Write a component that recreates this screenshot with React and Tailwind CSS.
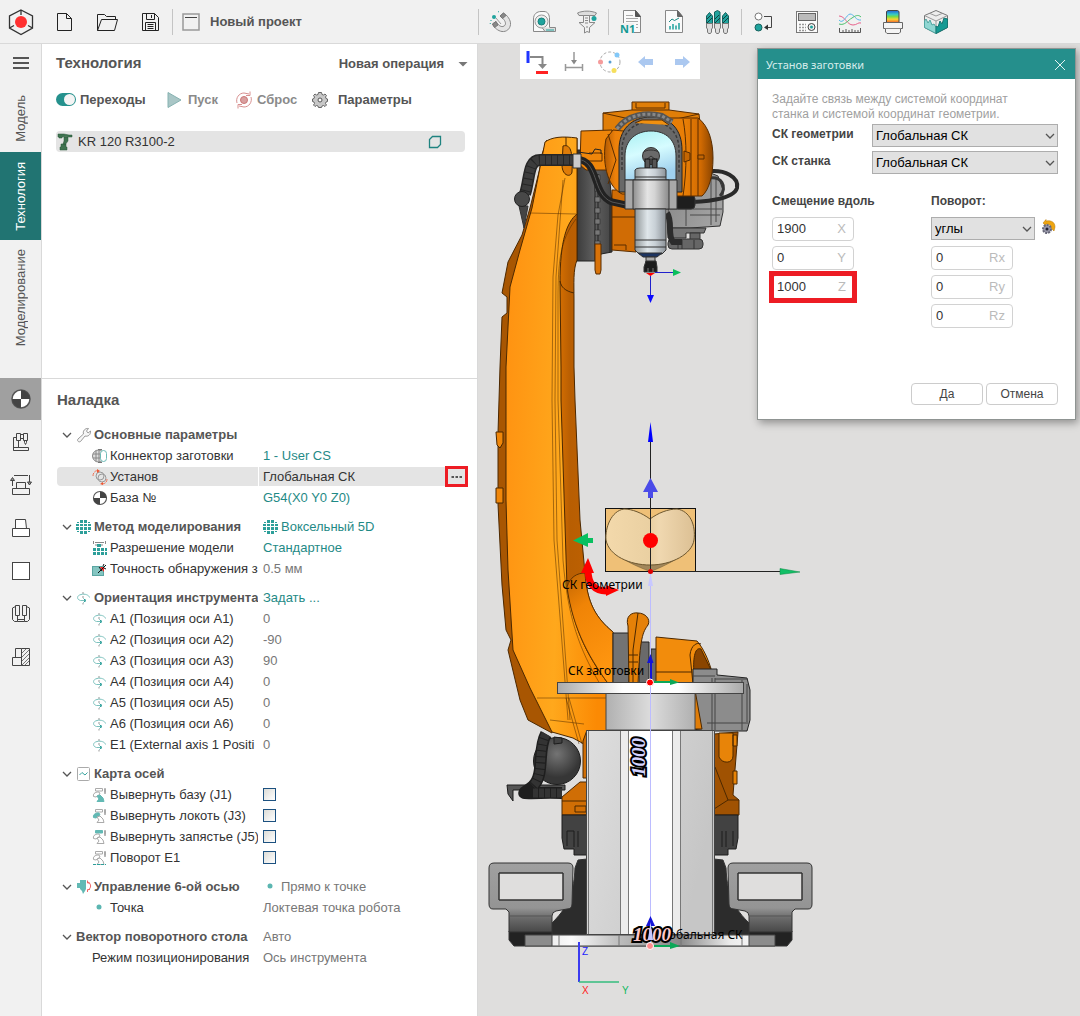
import { memo } from 'react';

// Base svg wrapper - used for all the icons
const Icon = ({ size = 24, box = 24, className = '', children }) => (
    <svg
        width={size}
        height={size}
        viewBox={`0 0 ${box} ${box}`}
        fill="none"
        stroke="#444"
        strokeWidth="1"
        className={`shrink-0 overflow-visible ${className}`}
        aria-hidden="true"
    >
        {children}
    </svg>
);

const TEAL = '#1fa39d';

/* ---------- Header icons ---------- */

const LogoIcon = () => (
    <Icon size={26} box={26}>
        <path d="M12 1 L23.500 7 V19 L12 25.500 L0.500 19 V7 Z M12 1 V6 M0.500 19 L5 16.500 M23.500 19 L19 16.500" strokeWidth="1.300" stroke="#333" />
        <circle cx="12" cy="13" r="6" fill="#ff3030" stroke="none" />
    </Icon>
);

const NewIcon = () => (
    <Icon>
        <path d="M4.500 3.500 H13.500 L18.500 8.500 V20.500 H4.500 Z M13.500 3.500 V8.500 H18.500" stroke="#222" />
    </Icon>
);

const OpenIcon = () => (
    <Icon>
        <path d="M1.500 20.500 V4.500 H8.500 L10.500 6.500 H19.500 V9.500 M1.500 20.500 L5.500 9.500 H21.500 L18.500 20.500 Z" stroke="#222" />
    </Icon>
);

const SaveIcon = () => (
    <Icon>
        <path d="M3.500 3.500 H15.500 L19.500 7.500 V20.500 H3.500 Z M7.500 3.500 V9.500 H15.500 V3.500 M12.500 5 V8 M6.500 20 V12.500 H16.500 V20 M8.500 14.500 H14.500 M8.500 16.500 H14.500 M8.500 18.500 H14.500" stroke="#222" />
    </Icon>
);

const ProjectIcon = () => (
    <Icon size={18} box={18}>
        <path d="M1 1 H17 V17 H1 Z" stroke="#999" strokeWidth="1.500" />
        <path d="M3 4.500 H15" stroke="#444" />
    </Icon>
);

const MagnetIcon = () => (
    <Icon>
        <path d="M11 6 L14.500 3 C18 5 22 10 21.500 14.500 C21 19 17.500 22 13 21.500 C9 21 5 17.500 3.500 14 L7 11.500 C9 15 11.500 17 14 16.500 C17 15.500 17 13 15.500 10.500 C14.500 9 13 7.500 11 6 Z" fill="#e4e4e4" stroke="#888" />
        <path d="M11 6 L14.500 3 L17 5.500 L13.500 8.500 Z M3.500 14 L7 11.500 L9 15 L5.500 17.500 Z" fill="#888" stroke="#777" />
        <circle cx="5" cy="7" r="2" fill={TEAL} stroke="none" />
        <path d="M1.500 11 L2.500 10 M9 2 L10 1.500 M1 14 L1.500 13" stroke={TEAL} />
        <path d="M7 8 L12 14" stroke="#999" />
    </Icon>
);

const TapeIcon = () => (
    <Icon>
        <path d="M1.500 21.500 V9 C1.500 4 5 1.500 9 1.500 H12 C16 1.500 17.500 5 17.500 9 V21.500 Z" fill="#fafafa" stroke="#888" />
        <circle cx="9.500" cy="11.500" r="6.500" stroke="#999" fill="#eee" />
        <circle cx="9.500" cy="11.500" r="3.500" fill={TEAL} stroke="#17807b" />
        <path d="M10 17.500 L13 21.500 H23.500 V17.500 H18" fill="#ddd" stroke="#888" />
        <path d="M14 20 H22" stroke={TEAL} />
    </Icon>
);

const CaliperIcon = () => (
    <Icon>
        <path d="M2.500 3 C8 0.500 16 0.500 21.500 3 L20 5.500 H4 Z" fill="#ddd" stroke="#888" />
        <path d="M8.500 5.500 H14.500 V12.500 H20 L14.500 17.500 V22.500 L12 21.500 L9.500 23 V17.500 L4 12.500 H8.500 Z" fill="#f0f0f0" stroke="#888" />
        <path d="M10 8 H13 M10 10.500 H13 M10 13 H13 M11 17 H13" stroke="#888" />
        <circle cx="19" cy="8.500" r="2.500" fill={TEAL} stroke="none" />
    </Icon>
);

const NcIcon = () => (
    <Icon>
        <path d="M4.500 0.500 H16.500 L21.500 6.500 V22.500 H4.500 Z" fill="#fafafa" stroke="#888" />
        <path d="M16.500 0.500 V6.500 H21.500 Z" fill="#555" stroke="#555" />
        <path d="M7 5.500 H14 M7 8.500 H19 M7 11.500 H19 M17 14.500 H19 M17 17.500 H19" stroke="#aaa" />
        <rect x="1" y="13" width="14" height="11" fill="#f1f1f1" stroke="none" />
        <text x="1" y="23" fill="#159a94" stroke="none" fontSize="11" fontWeight="700" fontFamily="Noto Sans, sans-serif">N1</text>
    </Icon>
);

const ReportIcon = () => (
    <Icon>
        <path d="M3.500 0.500 H15.500 L20.500 6.500 V22.500 H3.500 Z" fill="#fafafa" stroke="#888" />
        <path d="M15.500 0.500 V6.500 H20.500 Z" fill="#666" stroke="#666" />
        <path d="M7 12 L10 9 L12.500 10.500 L17 8" stroke="#1f8a85" />
        <path d="M8 19.500 V16 M11 19.500 V14 M14 19.500 V15.500 M17 19.500 V13" stroke={TEAL} strokeWidth="1.500" />
    </Icon>
);

const ToolsIcon = () => (
    <Icon>
        {[0, 8, 16].map((x) => (
            <g key={x} transform={`translate(${x} 0)`}>
                <path
                    d={x === 8 ? 'M1.500 15 V2 L4.500 0.500 L7 2 V15 Z' : 'M1.500 15 V6 L4.500 2.500 L7.500 6 V15 Z'}
                    fill={TEAL}
                    stroke="#155f5c"
                />
                <path d="M2 13 L7 8 M2 9 L6 5" stroke="#123f3e" />
                <path d="M1.500 13.500 H7.500 V18 L6.500 19 V22 L5.500 23.500 H3.500 L2.500 22 V19 L1.500 18 Z" fill="#ddd" stroke="#777" />
            </g>
        ))}
    </Icon>
);

const LinkIcon = () => (
    <Icon>
        <circle cx="6.500" cy="6.500" r="3.500" fill="#fff" stroke="#777" />
        <circle cx="6.500" cy="17.500" r="3.500" fill={TEAL} stroke="#17605d" />
        <path d="M12 6.500 H19.500 V17.500 H14" stroke="#444" />
        <path d="M16 14.500 L12 17.500 L16 20 Z" fill="#333" stroke="none" />
    </Icon>
);

const CalcIcon = () => (
    <Icon>
        <rect x="1.500" y="1.500" width="21" height="21" fill="#fbfbfb" stroke="#777" />
        <rect x="3.500" y="3.500" width="17" height="7" fill="#bbb" stroke="#666" />
        <path d="M4 14.500 H11 M4 17.500 H11 M4 20.500 H11" stroke="#999" strokeWidth="1.500" strokeDasharray="2 1" />
        <circle cx="16.500" cy="17" r="3.500" stroke="#444" fill="#eee" />
        <circle cx="16.500" cy="17" r="1.500" fill={TEAL} stroke="none" />
    </Icon>
);

const CurvesIcon = () => (
    <Icon>
        <path d="M1 6 C7 6 9 15 15 15 C19 15 20 12 23 13" stroke="#e8628c" />
        <path d="M1 10 C5 15 8 5 12 4 C16 4 18 11 23 10" stroke="#58b7ea" />
        <path d="M1 14 C7 16 10 10 14 8 C17 6 20 4 23 7" stroke="#4fc06f" />
        <path d="M1.500 18 V22.500 H22.500 V18 M5 22 V20 M8 22 V19 M11 22 V20 M14 22 V19 M17 22 V20 M20 22 V20" stroke="#555" />
    </Icon>
);

const GradientToolIcon = () => (
    <Icon>
        <defs>
            <linearGradient id="rainbow" x2="0" y2="1">
                <stop offset="0" stopColor="#235fd8" />
                <stop offset="0.3" stopColor="#35c8c8" />
                <stop offset="0.5" stopColor="#78dc45" />
                <stop offset="0.7" stopColor="#f7d432" />
                <stop offset="1" stopColor="#f4502d" />
            </linearGradient>
        </defs>
        <path d="M5.500 13 V1.500 L7 0.500 H16.500 L18 1.500 V13 Z" fill="url(#rainbow)" stroke="#444" />
        <path d="M2.500 12.500 H21.500 V18.500 H19.500 V22 L18 23.500 H6 L4.500 22 V18.500 H2.500 Z" fill="#f4f4f4" stroke="#666" />
        <path d="M4.500 18.500 H19.500" stroke="#888" />
    </Icon>
);

const CubeIcon = () => (
    <Icon>
        <path d="M12 0.500 L23.500 5.500 V17.500 L12 23.500 L0.500 17.500 V5.500 Z" fill="#ededed" stroke="#777" />
        <path d="M0.500 11 L2 9 L4 13 L6 10 L8 15 L10 14 L12 17 V23.500 L0.500 17.500 Z" fill="#8fd6d2" stroke="#4fa6a2" />
        <path d="M12 23.500 V16 L14 17 L16 11 L18 14 L20 8 L23.500 9 V17.500 Z" fill="#149a94" stroke="#167672" />
        <path d="M0.500 5.500 L12 11 L23.500 5.500 M12 11 V16 M6 3.500 L12 6 L18 3.500" stroke="#999" />
    </Icon>
);

/* ---------- View toolbar icons ---------- */

const SnapIcon = () => (
    <Icon>
        <path d="M2 1 V13" stroke="#1f35ff" strokeWidth="3" />
        <path d="M4 7 H16.500 V15" stroke="#888" strokeWidth="2" />
        <path d="M12 14 H21 L16.500 19 Z" fill="#888" stroke="none" />
        <path d="M10 22.500 H22" stroke="#f22" strokeWidth="3" />
    </Icon>
);

const DistanceIcon = () => (
    <Icon>
        <path d="M12 2 V13 M3 17.500 H21 M3.500 14 V21 M20.500 14 V21" stroke="#999" strokeWidth="1.500" />
        <path d="M9 10 L12 14.500 L15 10 Z" fill="#888" stroke="none" />
    </Icon>
);

const OrbitIcon = () => (
    <Icon>
        <circle cx="12" cy="12" r="10" stroke="#aaa" strokeDasharray="3 2" />
        <circle cx="19" cy="5" r="2.500" fill="#82c8f8" stroke="none" />
        <circle cx="2.500" cy="12" r="2.500" fill="#f59b9b" stroke="none" />
        <circle cx="16" cy="20.500" r="2.500" fill="#f6df5c" stroke="none" />
        <circle cx="12" cy="12" r="1.500" fill="#5a9fd0" stroke="none" />
    </Icon>
);

const BackIcon = () => (
    <Icon>
        <path d="M4 12 L11 6 V9 H19 V15 H11 V18 Z" fill="#abc8f0" stroke="none" />
    </Icon>
);

const ForwardIcon = () => (
    <Icon>
        <path d="M20 12 L13 6 V9 H5 V15 H13 V18 Z" fill="#abc8f0" stroke="none" />
    </Icon>
);

/* ---------- Sidebar icons ---------- */

const OriginIcon = ({ size = 22 }) => (
    <Icon size={size} box={22}>
        <circle cx="11" cy="11" r="9" fill="#fff" stroke="#555" strokeWidth="1.500" />
        <path d="M11 11 V2 A9 9 0 0 1 20 11 Z M11 11 V20 A9 9 0 0 1 2 11 Z" fill="#444" stroke="none" />
    </Icon>
);

const MachineIcon = () => (
    <Icon size={22} box={22}>
        <path d="M6.500 2.500 H10.500 V9.500 H6.500 Z M13.500 2.500 H17.500 V9.500 H13.500 Z M10.500 3.500 H13.500 M10.500 7.500 H13.500 M14.500 9.500 V11.500 L15.500 13.500 L16.500 11.500 V9.500 M6.500 6.500 H3.500 V19.500 M8.500 9.500 V16.500 M3.500 16.500 H18.500 V19.500 H3.500 Z" />
    </Icon>
);

const ClampIcon = () => (
    <Icon size={24} box={24}>
        <path d="M5 2.500 H19 M3.500 15.500 H20.500 V21.500 H3.500 Z M7.500 15.500 V9.500 H16.500 V15.500 M3.500 13 V7 M20.500 2 V9" />
        <path d="M3.500 4.500 L1.500 7.500 H5.500 Z M20.500 12 L18.500 9 H22.500 Z" fill="#999" />
    </Icon>
);

const FixtureIcon = () => (
    <Icon size={22} box={22}>
        <path d="M2.500 11.500 H19.500 V19.500 H2.500 Z M5.500 11.500 V2.500 H15.500 L16.500 11.500" fill="#fff" />
    </Icon>
);

const StockIcon = () => (
    <Icon size={22} box={22}>
        <rect x="2.500" y="2.500" width="17" height="17" fill="#fff" />
    </Icon>
);

const HeadsIcon = () => (
    <Icon size={22} box={22}>
        <path d="M5.500 2.500 H9.500 V12.500 H5.500 Z M12.500 2.500 H16.500 V12.500 H12.500 Z M5.500 3.500 L2.500 5 V16.500 L4.500 18.500 H7.500 V12.500 M16.500 3.500 L19.500 5 V16.500 L17.500 18.500 H14.500 V12.500 M7.500 16.500 H14.500 M7.500 18.500 H14.500" />
    </Icon>
);

const PartIcon = () => (
    <Icon size={22} box={22}>
        <path d="M2.500 19.500 V11.500 H11.500 V19.500 Z M5.500 11.500 V2.500 H11.500 M11.500 2.500 H19.500 V19.500 H11.500 Z" />
        <path d="M12 7 L16 3 M12 11 L19 4 M12 15 L19 8 M12 19 L19 12 M15 19 L19 15" stroke="#777" />
    </Icon>
);

/* ---------- Panel icons ---------- */

const RobotIcon = () => (
    <Icon size={18} box={18}>
        <path d="M2 1 H8 L13 2 H16 V4 H13 L10 3.500 L6 4 V5 H3 V4 H2 Z M8 4 L12 4 V8 L9 12 L7 11 L8 8 Z M5 11 H10 V14 H11 V17 H4 V14 H5 Z" fill="#3f7350" stroke="#2b593b" strokeWidth="0.500" />
    </Icon>
);

const ResetIcon = () => (
    <Icon size={18} box={18}>
        <circle cx="9" cy="9" r="3.500" fill="#d9a0a0" stroke="#c77" />
        <path d="M2 12 C0.500 7 4 2 9 2 L14 3 M16 6 C17.500 11 14 16 9 16 L4 15 M15 0.500 V4.500 H11 M3 17.500 V13.500 H7" stroke="#d89090" />
    </Icon>
);

const GearIcon = () => (
    <Icon size={18} box={18}>
        <path d="M7.500 1.500 H10.500 L11 3.500 L12.500 4 L14 3 L15.500 4.500 L14.500 6 L15 7.500 L16.500 8 V10.500 L15 11 L14.500 12.500 L15.500 14 L14 15.500 L12.500 14.500 L11 15 L10.500 16.500 H7.500 L7 15 L5.500 14.500 L4 15.500 L2.500 14 L3.500 12.500 L3 11 L1.500 10.500 V8 L3 7.500 L3.500 6 L2.500 4.500 L4 3 L5.500 4 L7 3.500 Z" fill="#c8c8c8" stroke="#666" />
        <circle cx="9" cy="9" r="2" fill="#fff" stroke="#555" />
    </Icon>
);

const WrenchIcon = () => (
    <Icon size={16} box={16}>
        <path d="M2 12 L7.500 7 C6.500 4 9 1 12.500 1.500 L10.500 4 L12 6 L14.500 4 C15 7.500 12 10 9 9 L4.500 14.500 C3 15.500 0.500 14 2 12 Z" stroke="#999" fill="#f6f6f6" />
    </Icon>
);

const ConnectorIcon = () => (
    <Icon size={16} box={16}>
        <circle cx="6.500" cy="8" r="6" stroke="#888" fill="#ddd" />
        <path d="M4 2.500 V13.500 M7 2 V14 M1 6 H9 M1 10 H9" stroke="#888" />
        <rect x="8.500" y="2.500" width="6" height="11" rx="3" stroke="#6cbab6" fill="#fff" />
        <path d="M6 1.500 H10 M6 14.500 H10" stroke="#777" />
    </Icon>
);

const SetupIcon = () => (
    <Icon size={16} box={16}>
        <circle cx="8" cy="7" r="4" stroke="#999" />
        <circle cx="10" cy="9" r="4" stroke="#999" />
        <path d="M1 7 C1 4 3 1.500 6 1.500 M15 10 C15 13 13 15 10 15" stroke="#ee7055" strokeDasharray="3 1" />
        <path d="M5 0 L8 2 L5 4 Z M11 13 L8 15 L11 16 Z" fill="#ee5530" stroke="none" />
    </Icon>
);

const VoxelIcon = () => (
    <Icon size={16} box={16}>
        <path d="M4 1 H7 V4 H4 Z M8 1 H11 V4 H8 Z M0 5 H3 V7 H0 Z M4 5 H7 V7 H4 Z M8 5 H11 V7 H8 Z M12 5 H15 V7 H12 Z M0 8 H3 V11 H0 Z M4 8 H7 V11 H4 Z M8 8 H11 V11 H8 Z M12 8 H15 V11 H12 Z M4 12 H7 V15 H4 Z M8 12 H11 V15 H8 Z M1 3 H3 V4 H1 Z M12 3 H14 V4 H12 Z M1 12 H3 V13 H1 Z M12 12 H14 V13 H12 Z" fill="#2d9f9a" stroke="none" />
    </Icon>
);

const ResolutionIcon = () => (
    <Icon size={16} box={16}>
        <path d="M1 8 H4 V11 H1 Z M5 8 H8 V11 H5 Z M9 8 H12 V11 H9 Z M13 8 H15 V11 H13 Z M1 12 H4 V15 H1 Z M5 12 H8 V15 H5 Z M9 12 H12 V15 H9 Z M13 12 H15 V15 H13 Z M5 4 H9 V7 H5 Z" fill="#2d9f9a" stroke="none" />
        <path d="M3 2.500 H12 M1.500 1 V4 M13.500 1 V4 M4 4 V6 M10 4 V6" stroke="#888" />
    </Icon>
);

const CollisionIcon = () => (
    <Icon size={16} box={16}>
        <rect x="0.500" y="5.500" width="11" height="9" fill="#84c5c1" stroke="#5aa6a2" />
        <path d="M8 6 H12 V11 Z" fill="#f22" stroke="none" />
        <path d="M6 12 L14 4 M7 6 L10 10 M12 3 L11 5 M14 8 L12 7" stroke="#111" />
    </Icon>
);

const AxisIcon = () => (
    <Icon size={16} box={16}>
        <path d="M7 2 V4 M7 6 V8 M7 13 V14.500" stroke="#bbb" strokeWidth="1.500" />
        <path d="M4.500 10.500 C0.500 9.500 0.500 5.500 5 4.500 C9 3.500 13 5 13.500 7.500 M4.500 10.500 H9" stroke="#7cc2be" />
        <path d="M7.500 8.500 L9.500 10.500 L7.500 12.500 M9 9 V12" stroke="#2d9f9a" />
    </Icon>
);

const MapIcon = () => (
    <Icon size={16} box={16}>
        <rect x="1.500" y="1.500" width="12" height="13" rx="1" stroke="#aaa" />
        <path d="M3.500 9 L6 6.500 L9 9 L11.500 6.500" stroke="#3aa5a0" />
    </Icon>
);

const PoseIcon = ({ part }) => (
    <Icon size={16} box={16}>
        <path d="M3.500 1.500 H10.500 V4 H3.500 Z" fill={part === 'wrist' ? '#62b9b4' : '#fff'} stroke={part === 'wrist' ? '#62b9b4' : '#aaa'} />
        <path d="M12.500 1.500 H13.500 V5 L13 7 L12.500 5 Z" stroke="#aaa" />
        <path d="M5 5 C2 6 1 7 1.500 9.500 L4 10 L8 7 L7 5 Z" fill={part === 'elbow' ? '#62b9b4' : '#fff'} stroke={part === 'elbow' ? '#62b9b4' : '#aaa'} />
        <path d="M5 9 L8 8 L11 11 L12 14.500 H5 L7 12 Z" fill={part === 'base' ? '#62b9b4' : '#fff'} stroke={part === 'base' ? '#62b9b4' : '#aaa'} />
        {part === 'rail' && <path d="M1 14.500 H14" stroke="#2d9f9a" strokeDasharray="3 1" />}
    </Icon>
);

const SixthAxisIcon = () => (
    <Icon size={16} box={16}>
        <path d="M1 4 H4 V1 H10 V10 L9 12 L7 15 L6 12 L4 10 V9 H1 Z" fill="#62b9b4" stroke="none" />
        <path d="M12 3 C15.500 5 15.500 9 12 11 M11.500 1.500 V4 H14 M11.500 13 V10.500 H14" stroke="#e66" />
    </Icon>
);

const DotIcon = () => (
    <Icon size={16} box={16}>
        <circle cx="7" cy="7" r="2.500" fill="#5bb6b1" stroke="none" />
    </Icon>
);

const Chevron = ({ className = '' }) => (
    <Icon size={10} box={10} className={className}>
        <path d="M1 3 L5 7 L9 3" stroke="#555" strokeWidth="1.300" />
    </Icon>
);

/* ---------- Data ---------- */

const measureTools = [
    { label: 'Привязки', icon: MagnetIcon },
    { label: 'Рулетка', icon: TapeIcon },
    { label: 'Измерения', icon: CaliperIcon },
];

const outputTools = [
    { label: 'Управляющая программа', icon: NcIcon },
    { label: 'Отчёт', icon: ReportIcon },
    { label: 'Инструменты', icon: ToolsIcon },
];

const extraTools = [
    { label: 'Связи', icon: LinkIcon },
    { label: 'Калькулятор', icon: CalcIcon },
    { label: 'Графики', icon: CurvesIcon },
    { label: 'Раскраска', icon: GradientToolIcon },
    { label: 'Заготовка', icon: CubeIcon },
];

const viewTools = [
    { label: 'Переместить', icon: SnapIcon },
    { label: 'Расстояние', icon: DistanceIcon },
    { label: 'Вращение', icon: OrbitIcon },
    { label: 'Назад', icon: BackIcon },
    { label: 'Вперёд', icon: ForwardIcon },
];

const sideTools = [
    { label: 'Станок', icon: MachineIcon },
    { label: 'Зажим', icon: ClampIcon },
    { label: 'Оснастка', icon: FixtureIcon },
    { label: 'Заготовка', icon: StockIcon },
    { label: 'Головки', icon: HeadsIcon },
    { label: 'Деталь', icon: PartIcon },
];

const axis = <AxisIcon />;

const groups = [
    {
        title: 'Основные параметры',
        icon: <WrenchIcon />,
        rows: [
            { name: 'Коннектор заготовки', icon: <ConnectorIcon />, value: '1 - User CS', link: true },
            { name: 'Установ', icon: <SetupIcon />, value: 'Глобальная СК', selected: true },
            { name: 'База №', icon: <OriginIcon size={16} />, value: 'G54(X0 Y0 Z0)', link: true },
        ],
    },
    {
        title: 'Метод моделирования',
        icon: <VoxelIcon />,
        value: 'Воксельный 5D',
        valueIcon: <VoxelIcon />,
        link: true,
        rows: [
            { name: 'Разрешение модели', icon: <ResolutionIcon />, value: 'Стандартное', link: true },
            { name: 'Точность обнаружения з', icon: <CollisionIcon />, value: '0.5 мм' },
        ],
    },
    {
        title: 'Ориентация инструмента',
        icon: axis,
        value: 'Задать ...',
        link: true,
        rows: [
            { name: 'A1 (Позиция оси A1)', icon: axis, value: '0' },
            { name: 'A2 (Позиция оси A2)', icon: axis, value: '-90' },
            { name: 'A3 (Позиция оси A3)', icon: axis, value: '90' },
            { name: 'A4 (Позиция оси A4)', icon: axis, value: '0' },
            { name: 'A5 (Позиция оси A5)', icon: axis, value: '0' },
            { name: 'A6 (Позиция оси A6)', icon: axis, value: '0' },
            { name: 'E1 (External axis 1 Positi', icon: axis, value: '0' },
        ],
    },
    {
        title: 'Карта осей',
        icon: <MapIcon />,
        rows: [
            { name: 'Вывернуть базу (J1)', icon: <PoseIcon part="base" />, check: 'flip-j1' },
            { name: 'Вывернуть локоть (J3)', icon: <PoseIcon part="elbow" />, check: 'flip-j3' },
            { name: 'Вывернуть запястье (J5)', icon: <PoseIcon part="wrist" />, check: 'flip-j5' },
            { name: 'Поворот E1', icon: <PoseIcon part="rail" />, check: 'turn-e1' },
        ],
    },
    {
        title: 'Управление 6-ой осью',
        icon: <SixthAxisIcon />,
        value: 'Прямо к точке',
        valueIcon: <DotIcon />,
        rows: [{ name: 'Точка', icon: <DotIcon />, value: 'Локтевая точка робота' }],
    },
    {
        title: 'Вектор поворотного стола',
        value: 'Авто',
        rows: [{ name: 'Режим позиционирования', value: 'Ось инструмента' }],
    },
];

/* ---------- Layout parts ---------- */

const ToolButton = ({ label, icon: Glyph }) => (
    <button type="button" aria-label={label} className="flex h-[43px] w-[43px] shrink-0 items-center justify-center">
        <Glyph />
    </button>
);

const Divider = ({ className = '' }) => <div className={`h-[26px] w-px shrink-0 bg-[#c4c4c4] ${className}`}></div>;

const Header = memo(() => (
    <header className="flex h-[44px] items-center border-b border-[#d9d9d9] bg-[#f1f1f1]">
        <div className="flex w-[478px] shrink-0 items-center">
            <ToolButton label="Меню программы" icon={LogoIcon} />
            <ToolButton label="Создать" icon={NewIcon} />
            <ToolButton label="Открыть" icon={OpenIcon} />
            <ToolButton label="Сохранить" icon={SaveIcon} />
            <Divider />
            <button type="button" className="flex items-center gap-2.5 pl-[9px] text-[13px] font-bold">
                <ProjectIcon />
                Новый проект
            </button>
        </div>
        <Divider />
        {measureTools.map((tool) => <ToolButton key={tool.label} {...tool} />)}
        <Divider />
        {outputTools.map((tool) => <ToolButton key={tool.label} {...tool} />)}
        <Divider className="ml-[3px]" />
        {extraTools.map((tool) => <ToolButton key={tool.label} {...tool} />)}
    </header>
));

Header.displayName = 'Header';

const SideTab = ({ label, active, className }) => (
    <button
        type="button"
        className={`flex w-full items-center justify-center ${active ? 'bg-[#217472] text-white' : ''} ${className}`}
    >
        <span className="rotate-180 whitespace-nowrap text-[13px] leading-4 [writing-mode:vertical-rl]">{label}</span>
    </button>
);

const Sidebar = memo(() => (
    <nav className="flex w-[42px] shrink-0 flex-col border-r border-[#d9d9d9] bg-[#f1f1f1]">
        <button type="button" aria-label="Меню" className="flex h-10 items-center justify-center">
            <Icon size={16} box={16}>
                <path d="M0 2 H16 M0 7 H16 M0 12 H16" stroke="#555" strokeWidth="2" />
            </Icon>
        </button>
        <SideTab label="Модель" className="h-[68px]" />
        <SideTab label="Технология" active className="h-[88px]" />
        <SideTab label="Моделирование" className="mb-[22px] h-[116px]" />
        <button type="button" aria-label="Наладка" className="flex h-[42px] items-center justify-center bg-[#a0a0a0]">
            <OriginIcon />
        </button>
        {sideTools.map(({ label, icon: Glyph }) => (
            <button key={label} type="button" aria-label={label} className="flex h-[43px] items-center justify-center">
                <Glyph />
            </button>
        ))}
    </nav>
));

Sidebar.displayName = 'Sidebar';

const TechnologyPanel = memo(() => (
    <section className="h-[335px] border-b border-[#d9d9d9] pl-[14px] pr-[9px]">
        <div className="flex h-[38px] items-center justify-between">
            <h2 className="text-[15px] font-bold">Технология</h2>
            <button type="button" className="flex items-center gap-3.5 pt-0.5 text-[13px] font-bold">
                Новая операция
                <Icon size={10} box={10}>
                    <path d="M0.500 3 H9.500 L5 7.500 Z" fill="#777" stroke="none" />
                </Icon>
            </button>
        </div>
        <div className="flex h-[35px] items-center text-[13px] font-bold">
            <label className="flex w-[110px] items-center gap-1">
                <input type="checkbox" role="switch" defaultChecked className="peer sr-only" />
                <Icon size={20} box={20}>
                    <rect x="0" y="3" width="20" height="13" rx="6.500" fill="#25918d" stroke="none" />
                    <circle cx="13.500" cy="9.500" r="5.500" fill="#f4f4f4" stroke="none" />
                </Icon>
                Переходы
            </label>
            <button type="button" className="flex w-[69px] items-center gap-1.5 text-[#8a8a8a]">
                <Icon size={16} box={16}>
                    <path d="M2 0.500 L15 8 L2 15.500 Z" fill="#a9c6c6" stroke="#86b2b1" />
                </Icon>
                Пуск
            </button>
            <button type="button" className="flex w-[76px] items-center gap-1 text-[#8a8a8a]">
                <ResetIcon />
                Сброс
            </button>
            <button type="button" className="flex items-center gap-[9px]">
                <GearIcon />
                Параметры
            </button>
        </div>
        <div className="mr-[3px] mt-[14px] flex h-[21px] items-center rounded bg-[#e4e4e4] pr-6 text-[13px] text-[#333]">
            <RobotIcon />
            <span className="grow pl-1">KR 120 R3100-2</span>
            <Icon size={12} box={12}>
                <path d="M3.500 0.500 H11.500 V8.500 L8.500 11.500 H0.500 V3.500 Z" stroke="#1f8380" strokeWidth="1.300" />
            </Icon>
        </div>
    </section>
));

TechnologyPanel.displayName = 'TechnologyPanel';

const PropertyValue = ({ value, icon, link, selected, check }) => (
    <div
        className={`flex h-[19px] min-w-0 grow items-center justify-between whitespace-nowrap pl-1 ${
            selected ? 'bg-[#e4e4e4] text-[#333]' : link ? 'text-[#1f8a86]' : 'text-[#777]'
        }`}
    >
        <span className="flex items-center gap-0.5">
            {icon}
            {value}
            {check && (
                <input
                    id={check}
                    type="checkbox"
                    className="h-[13px] w-[13px] appearance-none border border-[#1c5180] bg-gradient-to-br from-[#dcdcd7] to-white"
                />
            )}
        </span>
        {selected && (
            <button
                type="button"
                aria-label="Выбрать систему координат"
                className="flex h-[21px] w-[23px] items-center justify-center border-[3px] border-[#ed1c24]"
            >
                <Icon size={12} box={12}>
                    <path d="M0.500 6 H3 M4.500 6 H7 M8.500 6 H11" stroke="#555" strokeWidth="2" />
                </Icon>
            </button>
        )}
    </div>
);

const PropertyRow = ({ name, icon, value, link, selected, check }) => (
    <div className="flex h-[21px] items-center gap-px">
        <div
            className={`flex h-[19px] w-[201px] shrink-0 items-center gap-0.5 overflow-hidden whitespace-nowrap pl-[35px] text-[#333] ${
                selected ? 'rounded-l bg-[#e4e4e4]' : ''
            }`}
        >
            {icon}
            {check ? <label htmlFor={check}>{name}</label> : <span>{name}</span>}
        </div>
        <PropertyValue value={value} link={link} selected={selected} check={check} />
    </div>
);

const SetupPanel = memo(() => (
    <section className="pb-12 pl-[15px] pr-[9px] pt-[9px]">
        <h2 className="mb-[13px] text-[15px] font-bold leading-[23px]">Наладка</h2>
        <div className="flex flex-col gap-2 text-[13px]">
            {groups.map((group) => (
                <div key={group.title}>
                    <div className="flex h-[21px] items-center gap-px">
                        <button
                            type="button"
                            className="flex w-[201px] shrink-0 items-center gap-0.5 overflow-hidden whitespace-nowrap pl-[5px] font-bold"
                        >
                            <Chevron className="mr-0.5" />
                            {group.icon}
                            <span>{group.title}</span>
                        </button>
                        <PropertyValue value={group.value} icon={group.valueIcon} link={group.link} />
                    </div>
                    {group.rows.map((row) => <PropertyRow key={row.name} {...row} />)}
                </div>
            ))}
        </div>
    </section>
));

SetupPanel.displayName = 'SetupPanel';

/* ---------- 3D scene ---------- */

// Bracket on the floor, drawn for the left side and mirrored for the right
const FloorBracket = () => (
    <g stroke="#333">
        <path d="M578 860 L587 859 V936 H540 L553 922 C570 905 574 890 575 868 Z" fill="#2c2c2c" />
        <path d="M509 931 H552 V946 H514 L509 940 Z" fill="#222" />
        <path d="M509 912 L506 909 H493 Q489 909 489 904 V868 Q489 863 494 863 H568 Q573 863 573 868 L572 904 Q572 909 567 909 L556 911 Q552 912 552 916 V932 H509 Z M499 873 V900 H563 V873 Z" fill="url(#bracket)" fillRule="evenodd" />
        <path d="M499 873 H563 V900 H499 Z" fill="none" />
        <path d="M510 916 H552" stroke="#555" />
    </g>
);

const Scene = () => (
    <svg width="602" height="972" viewBox="478 44 602 972" className="block shrink-0" role="img" aria-label="Робот KR 120">
        <defs>
            <linearGradient id="arm" x2="1" y2="0.200">
                <stop offset="0" stopColor="#ff9010" />
                <stop offset="0.6" stopColor="#ffa81c" />
                <stop offset="1" stopColor="#fb8a04" />
            </linearGradient>
            <linearGradient id="side" x2="1">
                <stop offset="0" stopColor="#e87a02" />
                <stop offset="0.3" stopColor="#b85e02" />
                <stop offset="1" stopColor="#c46403" />
            </linearGradient>
            <linearGradient id="elbow" x2="0.300" y2="1">
                <stop offset="0" stopColor="#c06402" />
                <stop offset="0.35" stopColor="#f08406" />
                <stop offset="1" stopColor="#ff9610" />
            </linearGradient>
            <linearGradient id="dome" x2="1">
                <stop offset="0" stopColor="#b25a02" />
                <stop offset="0.3" stopColor="#ec800a" />
                <stop offset="0.7" stopColor="#f28a0c" />
                <stop offset="1" stopColor="#a05002" />
            </linearGradient>
            <linearGradient id="cap" x2="1">
                <stop offset="0" stopColor="#e87e06" />
                <stop offset="0.45" stopColor="#e87e06" />
                <stop offset="0.75" stopColor="#d06a02" />
                <stop offset="1" stopColor="#8a4400" />
            </linearGradient>
            <linearGradient id="steel" x2="1">
                <stop offset="0" stopColor="#8e8e8e" />
                <stop offset="0.4" stopColor="#e4e4e4" />
                <stop offset="0.6" stopColor="#d4d4d4" />
                <stop offset="1" stopColor="#8a8a8a" />
            </linearGradient>
            <linearGradient id="spindle" x2="1">
                <stop offset="0" stopColor="#909698" />
                <stop offset="0.4" stopColor="#dfe6ea" />
                <stop offset="0.65" stopColor="#c8d0d6" />
                <stop offset="1" stopColor="#8c9298" />
            </linearGradient>
            <linearGradient id="turntable" x2="1">
                <stop offset="0" stopColor="#b0b0b0" />
                <stop offset="0.5" stopColor="#dcdcdc" />
                <stop offset="1" stopColor="#b0b0b0" />
            </linearGradient>
            <linearGradient id="plate" x2="1">
                <stop offset="0" stopColor="#aaa" />
                <stop offset="0.35" stopColor="#fff" />
                <stop offset="0.65" stopColor="#fff" />
                <stop offset="1" stopColor="#aaa" />
            </linearGradient>
            <linearGradient id="panel" x2="1" y2="0.400">
                <stop offset="0" stopColor="#dedede" />
                <stop offset="1" stopColor="#c6c6c6" />
            </linearGradient>
            <linearGradient id="joint" x2="1">
                <stop offset="0" stopColor="#3c3c3c" />
                <stop offset="0.5" stopColor="#606060" />
                <stop offset="1" stopColor="#444" />
            </linearGradient>
            <linearGradient id="motor" x2="1" y2="0.500">
                <stop offset="0" stopColor="#868686" />
                <stop offset="1" stopColor="#a2a2a2" />
            </linearGradient>
            <linearGradient id="glass" x2="0.300" y2="1">
                <stop offset="0" stopColor="#a8f0f2" />
                <stop offset="0.5" stopColor="#d6fcff" />
                <stop offset="1" stopColor="#9fd0ee" />
            </linearGradient>
            <linearGradient id="bracket" x2="0" y2="1">
                <stop offset="0" stopColor="#a0a0a0" />
                <stop offset="0.65" stopColor="#949494" />
                <stop offset="0.8" stopColor="#6a6a6a" />
                <stop offset="1" stopColor="#484848" />
            </linearGradient>
            <linearGradient id="floor" x2="1">
                <stop offset="0" stopColor="#efefef" />
                <stop offset="0.1" stopColor="#fafafa" />
                <stop offset="0.35" stopColor="#bbb" />
                <stop offset="0.65" stopColor="#888" />
                <stop offset="0.9" stopColor="#eaeaea" />
                <stop offset="1" stopColor="#f4f4f4" />
            </linearGradient>
            <radialGradient id="ball" cx="0.5" cy="0.35">
                <stop offset="0" stopColor="#747474" />
                <stop offset="1" stopColor="#363636" />
            </radialGradient>
            <linearGradient id="wood" x2="1">
                <stop offset="0" stopColor="#f3d9ab" />
                <stop offset="0.5" stopColor="#ead0a2" />
                <stop offset="0.6" stopColor="#f0d8b0" />
                <stop offset="1" stopColor="#dcc094" />
            </linearGradient>
        </defs>

        {/* Wrist motor and its cables */}
        <g stroke="#333">
            <path d="M668 175 L708 172 L718 176 L723 190 V212 L720 226 L690 228 L668 228 Z" fill="url(#motor)" />
            <path d="M686 178 V226 M668 209 H722 M690 215 H720 M711 177 V225 M716 178 V222" stroke="#4a4a4a" fill="none" />
            <path d="M668 228 H706 L704 233 H686 V238 H668 Z" fill="#777" />
            <path d="M690 233 H700 V240 H690 Z" fill="#666" />
            <rect x="668" y="239" width="35" height="10" rx="4" fill="#666" />
            <path d="M678 240 V249 M682 240 V249 M694 240 V249" />
            <path d="M667 213 C673 222 667 235 673 242 H682" stroke="#2c2c2c" strokeWidth="6" fill="none" />
            <path d="M704 172 C726 168 739 178 737 188 C734 199 705 203 673 202" stroke="#2a2a2a" strokeWidth="4" fill="none" />
            <path d="M706 179 C722 174 728 188 720 196" stroke="#383838" strokeWidth="3" fill="none" />
            <rect x="674" y="195" width="21" height="14" rx="4" fill="#1e1e1e" />
        </g>

        {/* Shoulder joint between the arm and the wrist */}
        <g stroke="#222">
            <path d="M577 150 H607 L612 203 V252 L601 254 L597 261 H577 Z" fill="url(#joint)" />
            <path d="M595 172 V260 M610 198 V252 M598 174 V252" fill="none" />
            {[177, 188, 199, 210, 221, 232, 243].map((y) => (
                <rect key={y} x="595" y={y - 2} width="5" height="5" fill="#777" strokeWidth="0.500" />
            ))}
            <path d="M612 190 H636 V252 L612 250 Z" fill="#d06c05" stroke="#5a2d00" />
            <path d="M612 217 H635 M614 245 H626 V250" stroke="#5a2d00" fill="none" />
            <path d="M595 244 H601 V270 L600 274 H596 L595 270 Z" fill="#d87208" stroke="#5a2d00" />
        </g>

        {/* Wrist housing */}
        <g stroke="#5a2d00">
            <path d="M603 113 L632 110 V102 H669 V110 L699 114 L702 140 H603 Z" fill="#e07e08" />
            <path d="M603 113 L634 120 M699 114 L672 120 M636 103 V108 H665 V103 M632 110 H669" fill="none" />
            <path d="M581 131 L612 130 V170 H586 L580 165 Z" fill="#ef860a" />
            <path d="M606 139 L613 130 L633 132 L640 194 L622 194 C606 186 602 160 606 139 Z" fill="url(#dome)" />
            <path d="M664 118 H698 C709 126 713 142 713 158 C713 176 709 190 702 196 H664 Z" fill="url(#cap)" />
            <path d="M683 119 C687 140 687 170 683 196 M691 119 V196 M698 119 V196" fill="none" />
            <path d="M684 151 L690 153 V160 L684 162 Z M698 155 H704 V159 H698 Z" fill="#c46603" />
            <path d="M608 134 L616 160 L608 184 M589 153 H602 V161 H586" fill="none" />
        </g>
        <path d="M619 186 V150 C619 130 631 117 651 117 C671 117 682 130 682 150 V192 H619 Z" fill="#686868" stroke="#222" />
        <path d="M622 170 V150 C622 132 634 122 651 122 C668 122 679 132 679 150 V172" fill="none" stroke="#3a3a3a" strokeWidth="1.500" strokeDasharray="3 2" />
        <path d="M617 129 C628 114 647 112 662 116 L672 122" fill="none" stroke="#555" strokeWidth="6" />
        <path d="M617 129 C628 114 647 112 662 116 L672 122" fill="none" stroke="#888" strokeWidth="3" strokeDasharray="3 2" />
        <path d="M635 123 L642 120 H662 L669 125" stroke="#5a2d00" fill="#f0900f" />
        <path d="M625 180 V156 C625 140 636 131 651 131 C666 131 676 140 676 156 V180 Z" fill="url(#glass)" stroke="#333" />
        <circle cx="651" cy="156" r="8.500" fill="#6a6a6a" stroke="#333" />
        <path d="M643 153 C645 149 657 149 659 153 M646 160 L651 156 L656 160" stroke="#333" fill="none" />
        <rect x="645" y="159" width="5" height="9" fill="#555" stroke="#111" />
        <rect x="652" y="159" width="5" height="9" fill="#555" stroke="#111" />

        {/* Main arm */}
        <g stroke="#4c2800">
            <path d="M547 140 L530 208 L522 235 L508 262 L502 293 L507 297 V313 L502 317 L500 367 L498 433 L498 504 L502 585 L506 630 L511 640 L508 650 L520 700 L528 720 L552 733 L560 690 L540 160 Z" fill="#a85602" />
            <path d="M577 138 V218 L577 260 C573 270 574 283 574 300 V367 L575 400 L580 520 L585 573 C587 603 596 618 613 632 V698 L560 690 L552 160 Z" fill="url(#side)" />
            <path d="M545 142 C552 137 562 136 577 138 L577 214 C567 222 560 240 560 283 L561 367 L561 400 L567 587 C575 635 590 660 613 690 V740 L584 744 L573 738 L552 732 L530 688 L513 650 L508 570 L506 500 V367 L510 287 L520 250 L532 208 Z" fill="url(#arm)" />
            <path d="M567 587 C570 577 577 573 585 573 C587 603 596 618 613 632 V690 C590 660 573 630 567 587 Z" fill="url(#elbow)" strokeWidth="0.800" />
            <path d="M565 178 L558 215 L553 277 L552 400 L554 540 L568 720 M563 180 L556 277 L555 400 L557 540 L570 720 M576 219 C560 240 558 262 558 300 V400 L563 560 C568 620 580 650 600 684 M530 213 L576 214" fill="none" strokeWidth="0.500" />
            <path d="M563 146 C570 144 573 150 572 172 C571 178 562 176 562 165 Z M566 137 V146" fill="#de7c08" />
            <path d="M537 698 H613 M550 720 L584 724 M566 698 L579 744 M569 698 L582 744" fill="none" strokeWidth="0.500" />
            <path d="M574 293 C565 291 561 287 560 281" fill="none" />
            <path d="M496 432 H503 V443 L500 448 L497 445 Z M496 488 H503 V503 H496 Z" fill="#f0870a" />
        </g>

        {/* Cable bundle on the arm */}
        <g fill="none">
            <path d="M519 206 L524 228 L528 206 Z" fill="#444" stroke="#333" />
            <path d="M575 160 H540 C528 160 530 178 525 194" stroke="#262626" strokeWidth="12" />
            <path d="M575 160 H540 C528 160 530 178 525 194" stroke="#3c3c3c" strokeWidth="9" strokeDasharray="5 1" />
            <circle cx="522" cy="199" r="7.500" fill="#484848" stroke="#222" />
            <path d="M576 159 C600 160 591 194 612 202 L626 205" stroke="#222" strokeWidth="7" />
            <path d="M576 159 C600 160 591 194 612 202 L626 205" stroke="#555" strokeWidth="1" />
            <path d="M573 154 H581 V168 H573 Z" fill="#ccc" stroke="#333" />
            <path d="M578 152 L592 154 L595 149 L601 150 V154" stroke="#222" />
        </g>

        {/* Spindle */}
        <g stroke="#333">
            <path d="M635 170 Q636 168 640 168 H662 Q666 168 666 170 V181 H635 Z" fill="url(#spindle)" />
            <path d="M635 177 H666" />
            <path d="M625 180 H677 V209 H625 Z" fill="#a9a9a9" />
            <path d="M633 180 H669 V209 H633 Z" fill="url(#steel)" />
            <path d="M635 209 H666 V250 L662 254 H639 L635 250 Z" fill="url(#spindle)" />
            <path d="M635 240 H666 M635 247 H666" />
            <path d="M638 253 H662 L657 257 H643 Z" fill="#1d3562" />
            <path d="M646 257 H655 V263 H646 Z" fill="#aaa" />
            <path d="M646 261 L656 261 L657 267 V272 H644 V267 Z" fill="#1c1c1c" />
            <path d="M648 268 V272 M653 268 V272" stroke="#777" />
        </g>
        <path d="M646 273 H655 L650.500 276 Z" fill="#f00" />
        <path d="M655 272.500 H674 M650.500 276 V296" stroke="#2020cc" fill="none" />
        <path d="M673 269 L681 272.500 L673 276 Z" fill="#0bbf5c" />
        <path d="M647 295 H654 L650.500 303 Z" fill="#0b0bff" />

        {/* Robot base behind the table */}
        <g stroke="#222">
            <path d="M613 633 H629 V684 H613 Z" fill="#737373" />
            <path d="M639 642 H649 V684 H639 Z M651 649 H657 V684 H651 Z" fill="#6a6a6a" />
            <path d="M628 626 C625 616 632 612 638 613 C645 613 651 619 648 625 C643 632 640 636 638 684 H629 Z" fill="#e58108" stroke="#4c2800" />
            <path d="M638 613 L633 650 V684 M629 655 H638 M629 662 H638" fill="none" stroke="#4c2800" />
            <path d="M656 637 L697 641 C703 648 708 658 712 672 V684 H656 Z" fill="#f28c0c" stroke="#4c2800" />
            <path d="M656 672 H692 M693 684 L690 655 C691 645 697 642 701 644" fill="none" stroke="#4c2800" />
            <path d="M695 684 C692 662 694 646 701 649 L711 670 H697 Z" fill="#8a4500" stroke="#4c2800" />
            <path d="M693 669 H717 V675 L747 678 L750 690 V720 L747 731 H706 L693 729 Z" fill="#8c8c8c" />
            <path d="M715 679 H747 M693 676 H715 M712 678 V730 M715 678 V730 M742 680 V730 M747 684 V724 M707 723 H746" fill="none" stroke="#444" />
            <path d="M695 690 L702 729 H694 Z" fill="#e07d08" stroke="#4c2800" />
        </g>
        <g stroke="#4c2800" fill="#d06e05">
            <path d="M583 741 L587 730 V778 H583 Z M562 797 L580 782 H587 V815 H562 Z" />
            <path d="M714 734 L738 732 L733 795 L739 800 V815 H714 Z" fill="#a05202" />
            <path d="M719 733 H733 V756 C733 764 722 764 719 757 Z M733 735 H737 V746 H733 Z M733 771 H737 V784 H733 Z" fill="#e88408" />
            <path d="M715 767 L728 800 L714 809 M562 801 H586 M575 806 H586 V812 H575 Z M728 800 L739 800" fill="none" />
        </g>
        <g fill="#424242" stroke="#1c1c1c">
            <path d="M562 815 H587 V855 H574 V849 H564 L562 838 Z M714 815 H738 V838 L736 849 H728 V855 H714 Z" />
            <path d="M567 831 V846 M574 831 V847 M578 831 V847 M567 831 H574 M722 831 V847 M726 831 V847 M733 831 V846" fill="none" />
            <circle cx="557" cy="761" r="23.500" fill="url(#ball)" />
            <path d="M554 737 L562 738 V743 L554 744 Z" />
            <path d="M507 785 H565 V790 H513 V801 L508 794 Z" fill="#555" />
        </g>
        <path d="M546 734 C537 750 545 775 533 786 C520 797 516 792 562 793" fill="none" stroke="#1e1e1e" strokeWidth="12" />
        <path d="M546 734 C537 750 545 775 533 786" fill="none" stroke="#333" strokeWidth="9" strokeDasharray="5 1" />
        <path d="M533 793 H562" fill="none" stroke="#333" strokeWidth="9" strokeDasharray="5 1" />

        {/* Table */}
        <FloorBracket />
        <g transform="translate(1301 0) scale(-1 1)">
            <FloorBracket />
        </g>
        <g stroke="#444">
            <rect x="606" y="693" width="89" height="37" fill="url(#turntable)" />
            <rect x="557.500" y="682.500" width="186" height="11" fill="url(#plate)" />
            <path d="M525 935 H775 V946 H525 Z" fill="#8c8c8c" />
            <path d="M552 935 H749 V946 H552 Z" fill="url(#floor)" />
            <path d="M559 935 V946 M619 935 V946 M681 935 V946 M742 935 V946" fill="none" stroke="#777" />
            <path d="M586.500 730.500 H714.500 V934.500 H586.500 Z" fill="#fff" />
        </g>
        <path d="M587 731 H620 V934 H587 Z M681 731 H714 V934 H681 Z" fill="url(#panel)" />
        <path d="M621 731 H628 V934 H621 Z M673 731 H680 V934 H673 Z" fill="#ececec" />
        <path d="M588.500 731 V934 M620.500 731 V934 M628.500 731 V934 M672.500 731 V934 M680.500 731 V934 M712.500 731 V934" stroke="#777" fill="none" />

        {/* Workpiece */}
        <rect x="605.500" y="508.500" width="90" height="63" fill="#efc077" stroke="#111" />
        <path d="M612 550 C622 560 640 564 650 564 C662 564 680 560 689 548 C680 559 662 567 652 571 H649 C638 567 620 559 612 550 Z" fill="#a2875b" stroke="#6d572f" strokeWidth="0.500" />
        <path d="M650 519 C642 513 632 509 624 509 C611 511 605 528 606 540 C609 556 630 565 650 565 C672 565 692 554 694 540 C696 525 690 511 677 509 C668 509 658 513 650 519 Z" fill="url(#wood)" stroke="#6d572f" />

        {/* Coordinate systems */}
        <path d="M650.500 440 V571 M650 571.500 H781" stroke="#222" fill="none" />
        <path d="M650.500 422 L653 442 H648 Z" fill="#00f" />
        <path d="M780 568.500 L800 572 L780 574.500 Z" fill="#12bf66" stroke="#078840" strokeWidth="0.500" />
        <path d="M650.500 478 L658 492 H653 V498 H648 V492 H643 Z" fill="#4b4be8" />
        <path d="M573 540.500 L588 533 V538 H593 V543 H588 V547 Z" fill="#08c060" />
        <circle cx="650.500" cy="540.500" r="7.500" fill="#f00" />
        <path d="M650.500 574 V946" stroke="#bcbcff" />
        <path d="M650.500 573 L653 586 H648 Z" fill="#c8c8ff" />
        <path d="M588 570 C588 584 595 591 606 591" stroke="#f00" strokeWidth="7" fill="none" />
        <path d="M588 558 L594 573 H581 Z M619 590 L606 585 V596 Z" fill="#f00" />
        <circle cx="650.500" cy="571.500" r="2.500" fill="#d00" />
        <path d="M650.500 654 L653.500 663 H652 V680 H650 V663 H647 Z" fill="#1414d8" />
        <path d="M653 681 H670 V679 L679 682.500 L670 685 V683 H653 Z" fill="#0ba858" />
        <circle cx="650" cy="682.500" r="3.500" fill="#f00" stroke="#fff" strokeWidth="1" />
        <path d="M650.500 916 L655 926 H646 Z" fill="#1414d8" />
        <path d="M653 945 H670 V942 L680 946 L670 949 V947 H653 Z" fill="#0ba858" />
        <g fontFamily="Noto Sans, Open Sans, sans-serif" fontSize="12" fill="#000">
            <text x="562" y="589">СК геометрии</text>
            <text x="568" y="675">СК заготовки</text>
            <text x="656" y="939">Глобальная СК</text>
        </g>
        <g fontFamily="Liberation Serif, serif" fontStyle="italic" fontWeight="700" fontSize="19" stroke="#000" strokeWidth="4" paintOrder="stroke">
            <text transform="translate(645 776) rotate(-90)" fill="#d4d4ff">1000</text>
            <text x="633" y="941" fill="#ffc8c8">1000</text>
        </g>
        <path d="M650.500 922 L653 940 H648 Z" fill="#c8c8ff" />
        <circle cx="650" cy="946" r="3.500" fill="#ff8c8c" stroke="#fff" />

        {/* View triad */}
        <path d="M579 942 V982" stroke="#3b3bf0" strokeWidth="2" />
        <path d="M579 982 H619" stroke="#35bd7c" strokeWidth="1.500" />
        <g fontFamily="Liberation Sans, sans-serif" fontSize="10">
            <text x="582" y="955" fill="#22f">Z</text>
            <text x="582" y="994" fill="#f22">X</text>
            <text x="622" y="994" fill="#0fb860">Y</text>
        </g>
    </svg>
);

/* ---------- Dialog ---------- */

const Combo = ({ id, options, className = '' }) => (
    <div className={`relative ${className}`}>
        <select id={id} className="block h-[23px] w-full appearance-none border border-[#adadad] bg-[#e1e1e1] pl-[3px] pr-5 text-[13px] leading-5 text-black">
            {options.map((option) => <option key={option}>{option}</option>)}
        </select>
        <Chevron className="pointer-events-none absolute right-[3px] top-[7px]" />
    </div>
);

const AxisInput = ({ name, value, marked }) => (
    <label className="relative flex h-6 w-[82px] items-center rounded border border-[#d2d2d2] bg-white pl-1 pr-[7px] text-[13px]">
        <input type="text" defaultValue={value} className="min-w-0 grow bg-transparent text-[#333] outline-none" />
        <span className="text-[#bbb]">{name}</span>
        {marked && <span className="pointer-events-none absolute -inset-x-[4px] -inset-y-[5px] border-[5px] border-[#ed1c24]"></span>}
    </label>
);

const SetupDialog = memo(() => (
    <div
        role="dialog"
        aria-labelledby="setup-dialog-title"
        className="absolute right-1 top-1 w-[319px] border border-[#8f9492] bg-white text-[#444] shadow-[2px_3px_8px_rgba(0,0,0,0.35)]"
    >
        <div className="flex h-[30px] items-center justify-between bg-[#258f8c] px-2 pt-0.5 text-[#d5eceb]">
            <h2 id="setup-dialog-title" className="font-['Noto_Sans','Open_Sans',sans-serif] text-[11px]">Установ заготовки</h2>
            <button type="button" aria-label="Закрыть">
                <Icon size={14} box={14}>
                    <path d="M2 2 L12 12 M12 2 L2 12" stroke="#e6f4f3" />
                </Icon>
            </button>
        </div>
        <div className="px-[14px] pb-[14px] pt-[13px]">
            <p className="text-[12px] leading-[15px] text-[#a0a0a0]">
                Задайте связь между системой координат
                <br />
                станка и системой координат геометрии.
            </p>
            <div className="mr-[3px] mt-0.5 flex flex-col gap-1">
                <div className="flex h-[23px]">
                    <label htmlFor="geometry-cs" className="w-[100px] text-[12px] font-bold leading-5">СК геометрии</label>
                    <Combo id="geometry-cs" options={['Глобальная СК']} className="grow" />
                </div>
                <div className="flex h-[23px]">
                    <label htmlFor="machine-cs" className="w-[100px] text-[12px] font-bold leading-5">СК станка</label>
                    <Combo id="machine-cs" options={['Глобальная СК']} className="grow" />
                </div>
            </div>
            <div className="mt-[17px] flex">
                <fieldset className="w-[159px]">
                    <legend className="text-[12px] font-bold leading-5">Смещение вдоль</legend>
                    <div className="mt-1.5 flex flex-col gap-[5px]">
                        <AxisInput name="X" value="1900" />
                        <AxisInput name="Y" value="0" />
                        <AxisInput name="Z" value="1000" marked />
                    </div>
                </fieldset>
                <div>
                    <label htmlFor="rotation-mode" className="block text-[12px] font-bold leading-5">Поворот:</label>
                    <div className="mt-1.5 flex flex-col gap-[5px]">
                        <div className="flex h-6 items-start gap-[6px]">
                            <Combo id="rotation-mode" options={['углы']} className="w-[104px]" />
                            <button type="button" aria-label="Параметры поворота" className="pt-0.5">
                                <Icon size={16} box={16}>
                                    <path d="M2 4 L5 0.500 V2 C10 1 14 3 14 8 L13 12 L10 9 C10 6 8 5 5 5 V7 Z" fill="#eea511" stroke="#b57400" strokeWidth="0.500" />
                                    <circle cx="6" cy="10" r="4" stroke="#667" strokeWidth="2" strokeDasharray="2 1" fill="#99a" />
                                    <circle cx="6" cy="10" r="1.500" fill="#223" stroke="none" />
                                </Icon>
                            </button>
                        </div>
                        <AxisInput name="Rx" value="0" />
                        <AxisInput name="Ry" value="0" />
                        <AxisInput name="Rz" value="0" />
                    </div>
                </div>
            </div>
            <div className="mr-[3px] mt-[55px] flex justify-end gap-[3px] text-[12px]">
                <button type="button" className="h-[22px] w-[72px] rounded-sm border border-[#ccc]">Да</button>
                <button type="button" className="h-[22px] w-[72px] rounded-sm border border-[#ccc]">Отмена</button>
            </div>
        </div>
    </div>
));

SetupDialog.displayName = 'SetupDialog';

const Viewport = () => (
    <main className="relative min-w-0 grow overflow-hidden bg-[#dfdedd]">
        <Scene />
        <div className="absolute left-[42px] top-0 flex h-[35px] items-center bg-white">
            {viewTools.map(({ label, icon: Glyph }) => (
                <button key={label} type="button" aria-label={label} className="flex w-9 items-center justify-center">
                    <Glyph />
                </button>
            ))}
        </div>
        <SetupDialog />
    </main>
);

export default function App() {
    return (
        <div className="flex min-h-screen flex-col bg-white font-['Liberation_Sans',Arial,sans-serif] text-[#555]">
            <Header />
            <div className="flex grow">
                <Sidebar />
                <div className="w-[436px] shrink-0 border-r border-[#d9d9d9] bg-white">
                    <TechnologyPanel />
                    <SetupPanel />
                </div>
                <Viewport />
            </div>
        </div>
    );
}
